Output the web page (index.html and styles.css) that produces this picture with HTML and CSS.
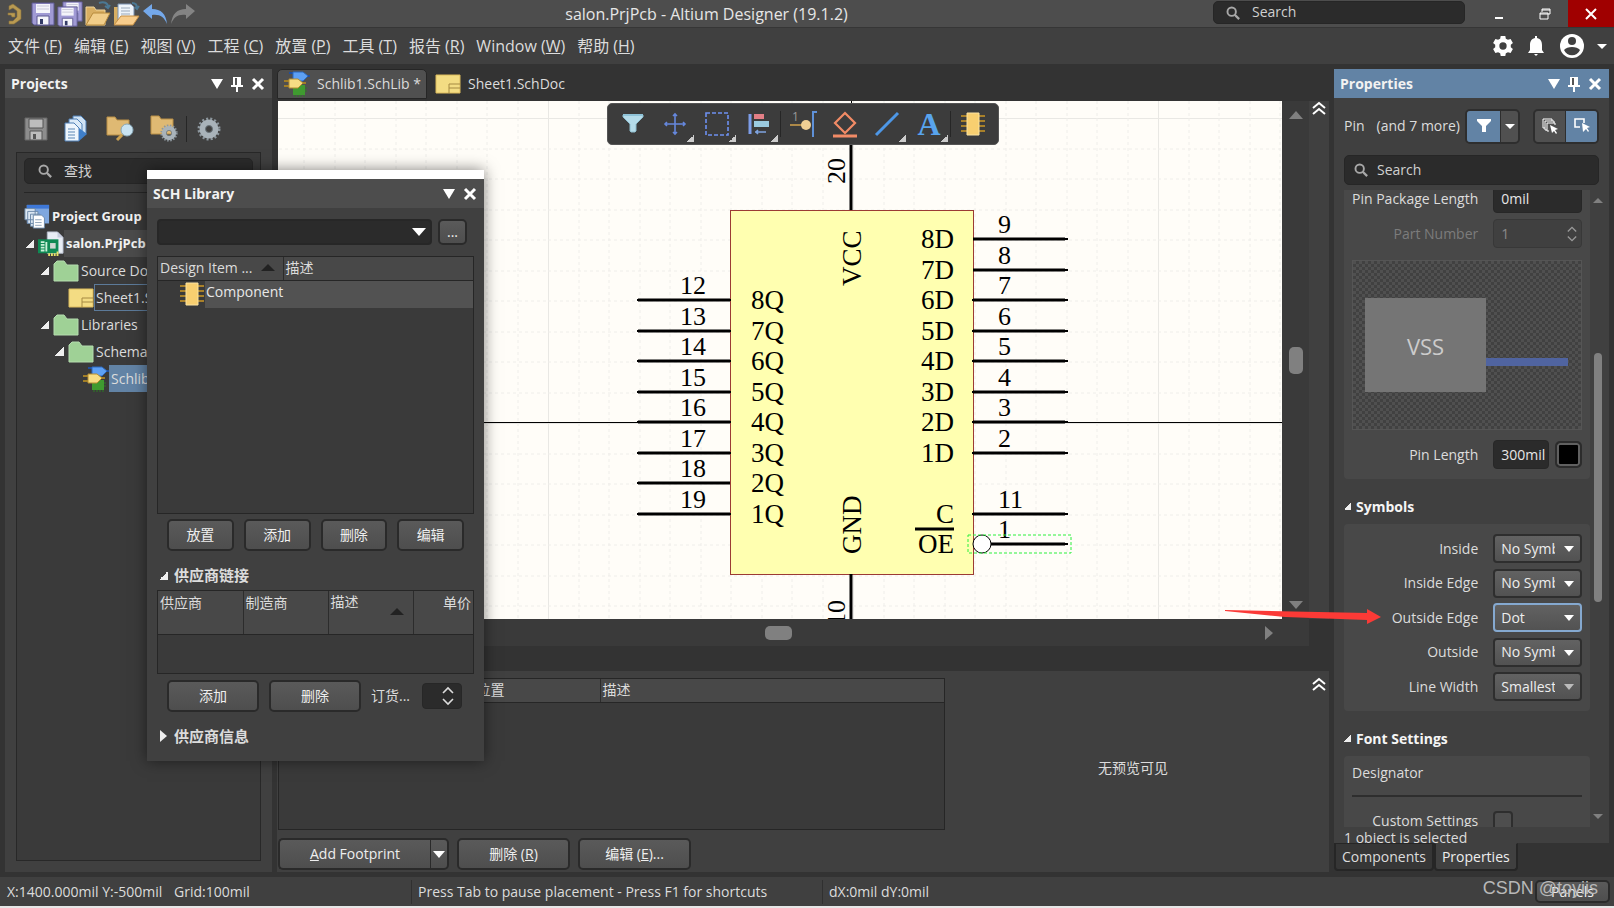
FILE: index.html
```html
<!DOCTYPE html>
<html lang="zh-CN">
<head>
    <meta charset="UTF-8">
    <meta name="viewport" content="width=device-width, initial-scale=1.0">
    <title>salon.PrjPcb - Altium Designer (19.1.2)</title>
    <link rel="stylesheet" href="styles.css">
</head>
<body>

    <!-- shared icons -->
    <svg class="defs" width="0" height="0" aria-hidden="true">
        <symbol id="floppy" viewBox="0 0 24 24">
            <path d="M1 1h22v22H3l-2-2z" fill="#a09ad4" stroke="#5b5790"/>
            <path d="M5 2h14v9H5z" fill="#f4f4fa"/>
            <path d="M6 4h12M6 7h12" stroke="#c8c8d8"/>
            <path d="M6 14h12v9H6z" fill="#f4f4fa" stroke="#5b5790"/>
            <path d="M9 17h3v5H9z" fill="#333a66"/>
        </symbol>
        <symbol id="search" viewBox="0 0 16 16">
            <circle cx="6.500" cy="6.500" r="4.800" fill="none" stroke="currentColor" stroke-width="2.200"/>
            <path d="M10 10l5 5" stroke="currentColor" stroke-width="2.600"/>
        </symbol>
        <symbol id="folder" viewBox="0 0 26 22">
            <path d="M1 21V4l3-3h7l3 4h11v16z" fill="#9fd196" stroke="#b4dcae"/>
        </symbol>
        <symbol id="sheet" viewBox="0 0 26 20">
            <path d="M1 1h24v18H1z" fill="#f3dc83" stroke="#dcbb5c"/>
            <path d="M25 10H14v9M14 14h11" fill="none" stroke="#a58a42"/>
        </symbol>
        <symbol id="schlib" viewBox="0 0 26 26">
            <path d="M9 14h12v10H9z" fill="#3f9a30"/>
            <path d="M11 24v2M14 24v2M17 24v2M20 24v2M21 17h2M21 20h2" stroke="#2d7a22"/>
            <path d="M5 2h4M22 5h4" stroke="#1f4f9f" stroke-width="2"/>
            <path d="M9 1h10l5 4-5 5H9z" fill="#5da0f4" stroke="#2d68bd"/>
            <path d="M0 10h5M0 15h5M18 12h4" stroke="#a27e26" stroke-width="2"/>
            <path d="M5 8h9l5 4-5 5H5z" fill="#f6dd84" stroke="#b48d30"/>
        </symbol>
        <symbol id="chip" viewBox="0 0 24 24">
            <path d="M0 4h24M0 9h24M0 14h24M0 19h24" stroke="#a8802a" stroke-width="2"/>
            <path d="M6 1h12v22H6z" fill="#f8cf70" stroke="#fbe3a2"/>
        </symbol>
        <symbol id="pin" viewBox="0 0 12 16">
            <path d="M2 1h8v8H2zM0 9h12v2H0zM5 11h2v5H5z" fill="#fff"/>
            <path d="M4 2h2v7H4z" fill="#555"/>
        </symbol>
        <symbol id="cross" viewBox="0 0 14 14">
            <path d="M2 2l10 10M12 2L2 12" stroke="#fff" stroke-width="3"/>
        </symbol>
        <symbol id="up2" viewBox="0 0 14 14">
            <path d="M1 7l6-5 6 5M1 13l6-5 6 5" fill="none" stroke="#fff" stroke-width="2"/>
        </symbol>
        <symbol id="gear" viewBox="0 0 24 24">
            <circle cx="12" cy="12" r="10" fill="none" stroke="#8d979e" stroke-width="3" stroke-dasharray="2 2"/>
            <circle cx="12" cy="12" r="6.500" fill="none" stroke="#a9b3ba" stroke-width="6"/>
            <circle cx="12" cy="12" r="3.500" fill="none" stroke="#6a747b"/>
        </symbol>
        <symbol id="spin" viewBox="0 0 12 20">
            <path d="M1 7l5-5 5 5M1 13l5 5 5-5" fill="none" stroke="currentColor" stroke-width="1.600"/>
        </symbol>
    </svg>

    <header class="titlebar">
        <div class="quick">
            <svg class="logo" width="15" height="22" viewBox="0 0 15 22"><path d="M2 3l4-2 8 6v9l-7 5H2v-3h4l4-4V8L6 5 2 7zM1 10h7v4H5l-1-2H1z" fill="#b99a52" stroke="#8b733c" stroke-width=".6"/></svg>
            <button title="Save"><svg width="24" height="24"><use href="#floppy"/></svg></button>
            <button title="Save All"><svg width="26" height="26" viewBox="0 0 26 26"><use href="#floppy" x="5" y="0" width="21" height="21"/><use href="#floppy" x="0" y="5" width="21" height="21"/></svg></button>
            <button title="Open"><svg width="26" height="26" viewBox="0 0 26 26"><path d="M1 24V6h8l2 3h9v15z" fill="#d8ae62" stroke="#f0d49a"/><path d="M1 24l7-12h17l-6 12z" fill="#f1cd89" stroke="#b88b3d"/><path d="M14 2c5-2 9 0 9 4m-3-1l3 2 2-3" fill="none" stroke="#4b7894" stroke-width="2"/></svg></button>
            <button title="Open Project"><svg width="27" height="26" viewBox="0 0 27 26"><path d="M1 24V6h6v18z" fill="#d8ae62"/><path d="M5 3h13l3 3v14H5z" fill="#eef4fa" stroke="#7890b0"/><path d="M8 7h9M8 10h9M8 13h9" stroke="#9aa9bb"/><path d="M1 24l7-9h18l-6 9z" fill="#f8cd8c" stroke="#c58f45"/><path d="M19 2c4 0 5 2 5 5m-2-1l2 2 2-3" fill="none" stroke="#4b7894" stroke-width="2"/></svg></button>
            <button title="Undo"><svg width="26" height="22" viewBox="0 0 26 22"><path d="M1 8l9-7v5c9 0 14 5 15 15-3-7-7-10-15-9v4z" fill="#74a8ea"/></svg></button>
            <button title="Redo"><svg width="26" height="22" viewBox="0 0 26 22"><path d="M25 8l-9-7v5C7 6 2 11 1 21c3-7 7-10 15-9v4z" fill="#848484"/></svg></button>
        </div>
        <h1 class="app-title">salon.PrjPcb - Altium Designer (19.1.2)</h1>
        <label class="search-box title-search"><svg width="14" height="14"><use href="#search"/></svg><input type="text" placeholder="Search" aria-label="Search"></label>
        <div class="window-buttons">
            <button title="Minimize"><svg width="12" height="12" viewBox="0 0 12 12"><path d="M2 10h8" stroke="#fff" stroke-width="2"/></svg></button>
            <button title="Restore"><svg width="12" height="12" viewBox="0 0 12 12"><path d="M3 4V1h8v5H9M1 5h8v6H1zM1 6h8M3 2h8" fill="none" stroke="#fff"/></svg></button>
            <button class="close" title="Close"><svg width="14" height="14" viewBox="0 0 14 14"><path d="M2 2l10 10M12 2L2 12" stroke="#fff" stroke-width="2"/></svg></button>
        </div>
    </header>

    <nav class="menubar">
        <button>文件 (<u>F</u>)</button>
        <button>编辑 (<u>E</u>)</button>
        <button>视图 (<u>V</u>)</button>
        <button>工程 (<u>C</u>)</button>
        <button>放置 (<u>P</u>)</button>
        <button>工具 (<u>T</u>)</button>
        <button>报告 (<u>R</u>)</button>
        <button>Window (<u>W</u>)</button>
        <button>帮助 (<u>H</u>)</button>
        <div class="account">
            <svg width="22" height="22" viewBox="0 0 24 24"><path fill="#fff" fill-rule="evenodd" d="M9.500 1h5l.6 3 2.300 1.300 2.900-1 2.500 4.300-2.300 2v2.800l2.300 2-2.500 4.300-2.900-1-2.300 1.300-.6 3h-5l-.6-3-2.300-1.300-2.900 1-2.500-4.300 2.300-2v-2.800l-2.300-2 2.500-4.300 2.900 1L8.900 4zM12 8a4 4 0 1 0 0 8 4 4 0 0 0 0-8z"/></svg>
            <svg width="18" height="22" viewBox="0 0 18 22"><path fill="#fff" d="M8 1h2v2c4 1 5 4 5 7v5l2 3H1l2-3v-5c0-3 1-6 5-7zM7 19h4l-2 2z"/></svg>
            <svg class="user" width="24" height="24" viewBox="0 0 24 24"><circle cx="12" cy="12" r="12" fill="#fff"/><circle cx="12" cy="7" r="4" fill="#404040"/><path d="M4 16c3-4 13-4 16 0-3 7-13 7-16 0z" fill="#404040"/></svg>
            <span class="caret small"></span>
        </div>
    </nav>

    <main class="workspace">

        <section class="panel projects">
            <div class="panel-head">
                <h2>Projects</h2>
                <span class="caret tall"></span>
                <svg width="12" height="16"><use href="#pin"/></svg>
                <svg width="14" height="14"><use href="#cross"/></svg>
            </div>
            <div class="project-tools">
                <button title="Save"><svg width="24" height="24" viewBox="0 0 24 24"><path d="M1 1h22v22H1z" fill="#8d8d8d" stroke="#666"/><path d="M5 2h14v9H5zM6 14h12v9H6z" fill="#bdbdbd" stroke="#555"/><path d="M9 17h3v5H9z" fill="#555"/></svg></button>
                <button title="Compile"><svg width="26" height="28" viewBox="0 0 26 28"><path d="M9 1h8l5 5v13H9z" fill="#cfe2f4" stroke="#4e7fb5"/><path d="M5 4h8l5 5v13H5z" fill="#dcebf8" stroke="#4e7fb5"/><path d="M1 8h9l5 5v13H1z" fill="#eef6fd" stroke="#4e7fb5"/><path d="M4 14h7M4 17h7M4 20h7M4 23h7" stroke="#5b87b5"/><path d="M15 13l8 6-8 7z" fill="#3f7fc9"/></svg></button>
                <button title="Explore"><svg width="28" height="26" viewBox="0 0 28 26"><path d="M1 19V1h8l2 3h12v15z" fill="#dfb973" stroke="#b98f46"/><path d="M16 19l-5 5" stroke="#caa050" stroke-width="3"/><circle cx="21" cy="14" r="6" fill="#c9e3f1" stroke="#87a7b8"/></svg></button>
                <button title="Project options"><svg width="28" height="28" viewBox="0 0 28 28"><path d="M1 19V1h8l2 3h12v15z" fill="#dfb973" stroke="#b98f46"/><use href="#gear" x="10" y="9" width="18" height="18"/></svg></button>
                <i class="tool-sep"></i>
                <button title="Settings"><svg width="24" height="24"><use href="#gear"/></svg></button>
            </div>
            <div class="tree-box">
                <label class="search-box"><svg width="14" height="14"><use href="#search"/></svg><input type="text" placeholder="查找" aria-label="查找"></label>
                <hr>
                <ul class="tree">
                    <li class="root"><svg width="26" height="27" viewBox="0 0 28 27"><path d="M3 1h24v20H3z" fill="#7fa7de"/><path d="M3 1h24v4H3z" fill="#3e78d8"/><path d="M1 5h11v12H1zM4 8h11v13H4zM7 11h10v13H7z" fill="#dbe7f3" stroke="#6a87a8"/><path d="M10 12h9l3 3v11H10z" fill="#fff" stroke="#6a87a8"/><path d="M12 17h7M12 20h7M12 23h7" stroke="#8aa0b8"/></svg><span>Project Group</span></li>
                    <li class="level1"><i class="open"></i><svg width="26" height="27" viewBox="0 0 28 27"><path d="M10 1h11l6 6v17H10z" fill="#e8edf5" stroke="#b5bccb"/><path d="M21 1v6h6" fill="#c5cbdd"/><path d="M0 9h22v15H0z" fill="#0f8a54"/><path d="M3 12h4M3 15h4M3 18h4M3 21h4M9 12v10" stroke="#c9f0d8" stroke-width="2"/><path d="M13 13h6v6h-6z" fill="#cfd8d2"/><path d="M12 24v3M15 24v3M18 24v3M21 22v5" stroke="#e8e46a" stroke-width="2"/></svg><span class="active">salon.PrjPcb</span></li>
                    <li class="level2"><i class="open"></i><svg width="26" height="22"><use href="#folder"/></svg><span>Source Documents</span></li>
                    <li class="level3 leaf"><svg width="26" height="20"><use href="#sheet"/></svg><span class="outlined">Sheet1.SchDoc</span></li>
                    <li class="level2"><i class="open"></i><svg width="26" height="22"><use href="#folder"/></svg><span>Libraries</span></li>
                    <li class="level3"><i class="open"></i><svg width="26" height="22"><use href="#folder"/></svg><span>Schematic Library</span></li>
                    <li class="level4 leaf"><svg width="26" height="26"><use href="#schlib"/></svg><span class="selected">Schlib1.SchLib</span></li>
                </ul>
            </div>
        </section>

        <section class="editor">
            <div class="doc-tabs">
                <button class="doc-tab current"><svg width="26" height="26"><use href="#schlib"/></svg>Schlib1.SchLib *</button>
                <button class="doc-tab"><svg width="26" height="20"><use href="#sheet"/></svg>Sheet1.SchDoc</button>
            </div>
            <div class="sheet-area">
                <div class="sheet">
                    <svg class="drawing" width="100%" height="100%">
                        <defs>
                            <pattern id="grid" x="270" y="17" width="305" height="305" patternUnits="userSpaceOnUse">
                                <path d="M0 0v305M0 0h305" stroke="#e9e8e4" stroke-width="2"/>
                                <path d="M31 0v305M61 0v305M92 0v305M122 0v305M153 0v305M183 0v305M214 0v305M244 0v305M275 0v305M0 31h305M0 61h305M0 92h305M0 122h305M0 153h305M0 183h305M0 214h305M0 244h305M0 275h305" stroke="#efeeea" stroke-dasharray="3 3"/>
                            </pattern>
                        </defs>
                        <rect width="100%" height="100%" fill="url(#grid)"/>
                        <g transform="translate(-278 -101)">
                            <path class="axis" d="M278 422h2000M851 101v5"/>
                            <rect class="part" x="730" y="210" width="243" height="364"/>
                            <path class="pins" d="M638 300h92M638 331h92M638 361h92M638 392h92M638 422h92M638 453h92M638 483h92M638 514h92"/>
                            <path class="pins" d="M973 239h92M973 270h92M973 300h92M973 331h92M973 361h92M973 392h92M973 422h92M973 453h92M973 514h92M991 544h74"/>
                            <path class="pins" d="M851 130v80M851 574v60"/>
                            <path class="pin-ends" d="M637 300h431M637 331h431M637 361h431M637 392h431M637 422h431M637 453h431M637 483h1M637 514h431M1065 239h3M1065 270h3M1065 544h3"/>
                            <rect class="part-fill" x="731" y="211" width="241" height="362"/>
                            <g class="numbers" text-anchor="middle">
                                <text x="693" y="294">12</text><text x="693" y="325">13</text><text x="693" y="355">14</text><text x="693" y="386">15</text>
                                <text x="693" y="416">16</text><text x="693" y="447">17</text><text x="693" y="477">18</text><text x="693" y="508">19</text>
                            </g>
                            <g class="numbers">
                                <text x="998" y="233">9</text><text x="998" y="264">8</text><text x="998" y="294">7</text><text x="998" y="325">6</text><text x="998" y="355">5</text>
                                <text x="998" y="386">4</text><text x="998" y="416">3</text><text x="998" y="447">2</text><text x="998" y="508">11</text><text x="998" y="538">1</text>
                                <text transform="translate(845 184) rotate(-90)">20</text>
                                <text transform="translate(845 626) rotate(-90)">10</text>
                            </g>
                            <g class="names">
                                <text x="751" y="309">8Q</text><text x="751" y="340">7Q</text><text x="751" y="370">6Q</text><text x="751" y="401">5Q</text>
                                <text x="751" y="431">4Q</text><text x="751" y="462">3Q</text><text x="751" y="492">2Q</text><text x="751" y="523">1Q</text>
                                <text transform="translate(861 286) rotate(-90)">VCC</text>
                                <text transform="translate(861 554) rotate(-90)">GND</text>
                            </g>
                            <g class="names" text-anchor="end">
                                <text x="954" y="248">8D</text><text x="954" y="279">7D</text><text x="954" y="309">6D</text><text x="954" y="340">5D</text><text x="954" y="370">4D</text>
                                <text x="954" y="401">3D</text><text x="954" y="431">2D</text><text x="954" y="462">1D</text><text x="954" y="523">C</text><text x="954" y="553">OE</text>
                            </g>
                            <path class="pins" d="M915 529h39"/>
                            <circle cx="982" cy="544" r="9" fill="#fff" stroke="#000"/>
                            <rect class="selection" x="968" y="535" width="103" height="18"/>
                        </g>
                    </svg>
                    <div class="active-bar">
                        <button title="Filter"><svg width="26" height="26" viewBox="0 0 26 26"><path d="M3 4h20v2l-7 7v7l-1 1h-4l-1-1v-7L3 6z" fill="#b5dcea" stroke="#8dbccd"/><path d="M3 4h20" stroke="#8fc3d8" stroke-width="2"/></svg></button>
                        <button class="more" title="Move"><svg width="26" height="26" viewBox="0 0 26 26"><path d="M13 3v20M3 13h20M11 5l2-2 2 2M11 21l2 2 2-2M5 11l-2 2 2 2M21 11l2 2-2 2" fill="none" stroke="#6587dc" stroke-width="1.600"/></svg></button>
                        <button class="more" title="Select"><svg width="26" height="26" viewBox="0 0 26 26"><path d="M2 2h22v22H2z" fill="none" stroke="#6d90f0" stroke-width="1.600" stroke-dasharray="4 2"/></svg></button>
                        <button class="more" title="Align"><svg width="26" height="26" viewBox="0 0 26 26"><path d="M4 3v20" stroke="#7d9de8" stroke-width="3"/><path d="M8 3h10v5H8z" fill="#e37f86"/><path d="M8 10h15v6H8z" fill="#9bcbe0"/><path d="M9 21h11M12 19l-2 2 2 2" fill="none" stroke="#7fa4e0" stroke-width="1.600"/></svg></button>
                        <i class="tool-sep"></i>
                        <button title="Place pin"><svg width="28" height="28" viewBox="0 0 28 28"><path d="M1 15h14" stroke="#c99b4b" stroke-width="1.600"/><circle cx="17" cy="15" r="5" fill="#f0cf94"/><path d="M28 2h-4v25" fill="none" stroke="#5f91d8" stroke-width="2"/><text x="3" y="11" font-size="12" fill="#999">1</text></svg></button>
                        <button title="Place port"><svg width="26" height="28" viewBox="0 0 26 28"><path d="M13 3l10 10-10 10L3 13z" fill="none" stroke="#f28b66" stroke-width="2.200"/><path d="M1 26h24" stroke="#f28b66" stroke-width="3"/></svg></button>
                        <button class="more" title="Place line"><svg width="26" height="26" viewBox="0 0 26 26"><path d="M2 24L24 2" stroke="#4d97e6" stroke-width="3"/></svg></button>
                        <button class="more letter" title="Place text">A</button>
                        <i class="tool-sep"></i>
                        <button title="Place part"><svg width="24" height="26"><use href="#chip"/></svg></button>
                    </div>
                </div>
                <div class="vscroll"><i class="arrow up"></i><i class="thumb"></i><i class="arrow down"></i></div>
                <button class="collapse" title="Collapse"><svg width="14" height="14"><use href="#up2"/></svg></button>
            </div>
            <div class="hscroll"><i class="thumb"></i><i class="arrow right"></i></div>
            <div class="strip"></div>
            <div class="models">
                <div class="models-left">
                    <div class="grid-box">
                        <table>
                            <tr><th class="w-model"></th><th class="w-place">位置</th><th>描述</th></tr>
                        </table>
                    </div>
                    <div class="model-buttons">
                        <div class="split">
                            <button class="btn"><u>A</u>dd Footprint</button>
                            <button class="btn drop" title="More"><span class="caret"></span></button>
                        </div>
                        <button class="btn">删除 (<u>R</u>)</button>
                        <button class="btn">编辑 (<u>E</u>)...</button>
                    </div>
                </div>
                <p class="no-preview">无预览可见</p>
                <button class="collapse" title="Collapse"><svg width="14" height="14"><use href="#up2"/></svg></button>
            </div>
        </section>

        <section class="properties">
            <div class="panel props-panel">
                <div class="panel-head focused">
                    <h2>Properties</h2>
                    <span class="caret tall"></span>
                    <svg width="12" height="16"><use href="#pin"/></svg>
                    <svg width="14" height="14"><use href="#cross"/></svg>
                </div>
                <div class="filter-row">
                    <span>Pin</span>
                    <span class="count">(and 7 more)</span>
                    <div class="btn-group">
                        <button class="on" title="Filter"><svg width="16" height="16" viewBox="0 0 16 16"><path d="M1 1h14v2l-5 5v6H6V8L1 3z" fill="#fff"/></svg></button>
                        <button class="thin" title="Filter list"><span class="caret small"></span></button>
                    </div>
                    <div class="btn-group">
                        <button class="half" title="Select all"><svg width="16" height="16" viewBox="0 0 16 16"><path d="M3 10H1V1h9v2M5 12H3V3h9v2M7 13H5V5h8v2" fill="none" stroke="#fff"/><path d="M8 7l8 4-3 1 2 3-1 1-2-3-2 2z" fill="#fff"/></svg></button>
                        <button class="half on" title="Select"><svg width="16" height="16" viewBox="0 0 16 16"><path d="M6 9H1V1h9v4" fill="none" stroke="#fff" stroke-width="1.600"/><path d="M8 5l8 4-3 1 2 3-1 1-2-3-3 3z" fill="#fff"/></svg></button>
                    </div>
                </div>
                <label class="search-box props-search"><svg width="14" height="14"><use href="#search"/></svg><input type="text" placeholder="Search" aria-label="Search properties"></label>

                <div class="props-scroll">
                    <div class="props-content">
                        <div class="card first">
                            <div class="field"><label for="pkg">Pin Package Length</label><input id="pkg" class="box" type="text" value="0mil"></div>
                            <div class="field off"><label for="part">Part Number</label><div class="spinner"><input id="part" class="box" type="text" value="1" disabled><svg width="10" height="20"><use href="#spin"/></svg></div></div>
                            <div class="preview"><div class="preview-body">VSS</div><div class="preview-pin"></div></div>
                            <div class="field"><label for="len">Pin Length</label><div class="pair"><input id="len" class="box" type="text" value="300mil"><button class="swatch" title="Colour"></button></div></div>
                        </div>
                        <h3><i class="open"></i>Symbols</h3>
                        <div class="card symbols">
                            <div class="field"><label for="s1">Inside</label><div class="select"><select id="s1"><option>No Symbol</option></select></div></div>
                            <div class="field"><label for="s2">Inside Edge</label><div class="select"><select id="s2"><option>No Symbol</option></select></div></div>
                            <div class="field"><label for="s3">Outside Edge</label><div class="select picked"><select id="s3"><option>Dot</option></select></div></div>
                            <div class="field"><label for="s4">Outside</label><div class="select"><select id="s4"><option>No Symbol</option></select></div></div>
                            <div class="field"><label for="s5">Line Width</label><div class="select dim"><select id="s5"><option>Smallest</option></select></div></div>
                        </div>
                        <h3><i class="open"></i>Font Settings</h3>
                        <div class="card fonts">
                            <h4>Designator</h4>
                            <div class="field"><label for="custom">Custom Settings</label><div class="tick"><input id="custom" type="checkbox"></div></div>
                        </div>
                    </div>
                    <div class="props-bar"><i class="arrow up"></i><i class="thumb"></i><i class="arrow down"></i></div>
                </div>
                <p class="selected-count">1 object is selected</p>
            </div>
            <div class="panel-tabs">
                <button>Components</button>
                <button class="current">Properties</button>
            </div>
            <svg class="pointer" width="156" height="16" viewBox="0 0 156 16"><path d="M0 1l142 3V0l14 8-14 7v-4L60 8 0 2z" fill="#fb3a36"/></svg>
        </section>
    </main>

    <footer class="statusbar">
        <span class="coords">X:1400.000mil Y:-500mil</span>
        <span class="grid-size">Grid:100mil</span>
        <span class="hint">Press Tab to pause placement - Press F1 for shortcuts</span>
        <span class="delta">dX:0mil dY:0mil</span>
        <button class="btn panels">Panels</button>
        <span class="watermark">CSDN @toyiis</span>
    </footer>

    <!-- floating library window -->
    <section class="sch-library">
        <div class="panel-head">
            <h2>SCH Library</h2>
            <span class="caret tall"></span>
            <svg width="14" height="14"><use href="#cross"/></svg>
        </div>
        <div class="sch-body">
            <div class="lib-row">
                <div class="select lib"><select aria-label="Library"><option></option></select></div>
                <button class="btn dots">...</button>
            </div>
            <div class="grid-box items">
                <table>
                    <tr><th class="w-item">Design Item ... <i class="sorted"></i></th><th>描述</th></tr>
                    <tr><td colspan="2"><div class="item"><svg width="24" height="24"><use href="#chip"/></svg><span>Component</span></div></td></tr>
                </table>
            </div>
            <div class="four">
                <button class="btn">放置</button>
                <button class="btn">添加</button>
                <button class="btn">删除</button>
                <button class="btn">编辑</button>
            </div>
            <h3><i class="open"></i>供应商链接</h3>
            <div class="grid-box suppliers">
                <table>
                    <tr><th>供应商</th><th>制造商</th><th>描述<i class="sorted"></i></th><th class="price">单价</th></tr>
                </table>
            </div>
            <div class="order">
                <button class="btn">添加</button>
                <button class="btn">删除</button>
                <label for="qty">订货...</label>
                <div class="spinner qty"><input id="qty" class="box" type="text"><svg width="12" height="20"><use href="#spin"/></svg></div>
            </div>
            <h3 class="info"><i class="closed"></i>供应商信息</h3>
        </div>
    </section>

</body>
</html>
```

FILE: styles.css
```css
* {
    box-sizing: border-box;
}
body {
    margin: 0;
    height: 100vh;
    display: flex;
    flex-direction: column;
    overflow: hidden;
    position: relative;
    background-color: #333;
    border-bottom: 2px solid #e6e6e6;
    color: #dcdcdc;
    font-family: "Open Sans", "Noto Sans CJK SC", sans-serif;
    font-size: 14px;
    line-height: 20px;
}
h1, h2, h3, h4, p, ul {
    margin: 0;
    padding: 0;
    font-size: 14px;
}
button, input, select {
    font: inherit;
    color: inherit;
    margin: 0;
}
button {
    background: none;
    border: none;
    padding: 0;
}
svg {
    display: block;
    flex: none;
}
i {
    flex: none;
}
.defs {
    position: absolute;
}

/* little triangles */
.caret {
    flex: none;
    border: 7px solid transparent;
    border-top: 7px solid #fff;
    border-bottom: none;
}
.caret.tall {
    border-width: 6px;
    border-top-width: 10px;
    border-bottom: none;
}
.caret.small {
    border-width: 5px;
    border-top-width: 5px;
    border-bottom: none;
}
.open {
    width: 9px;
    height: 9px;
    background: linear-gradient(135deg, transparent 50%, #eee 50%);
}
.closed {
    border: 6px solid transparent;
    border-left: 7px solid #eee;
    border-right: none;
}
.sorted {
    display: inline-block;
    border: 7px solid transparent;
    border-bottom: 7px solid #222;
    border-top: none;
}
.arrow {
    border: 7px solid transparent;
}
.arrow.up {
    border-bottom: 8px solid #808080;
    border-top: none;
}
.arrow.down {
    border-top: 8px solid #808080;
    border-bottom: none;
}
.arrow.right {
    border-left: 8px solid #808080;
    border-right: none;
}

/* shared controls */
.btn {
    height: 32px;
    border: 2px solid #2a2a2a;
    border-radius: 5px;
    background: linear-gradient(#5a5a5a, #4e4e4e);
    color: #eee;
}
.box {
    width: 100%;
    height: 29px;
    border: 1px solid #272727;
    border-radius: 4px;
    background-color: #2b2b2b;
    padding: 0 0 0 7px;
    color: #e6e6e6;
}
.search-box {
    display: flex;
    align-items: center;
    background-color: #2b2b2b;
    border: 1px solid #262626;
    border-radius: 5px;
    color: #a8a8a8;
}
.search-box input {
    flex: 1;
    min-width: 0;
    border: none;
    background: none;
    padding: 0 0 1px;
}
.search-box input::placeholder {
    color: #d0d0d0;
}
.select {
    position: relative;
}
.select select {
    display: block;
    width: 100%;
    height: 29px;
    appearance: none;
    border: 2px solid #2e2e2e;
    border-radius: 4px;
    background: linear-gradient(#626262, #525252);
    color: #eee;
    padding: 0 25px 0 6px;
}
.select::after {
    content: "";
    position: absolute;
    right: 8px;
    top: 12px;
    border: 5px solid transparent;
    border-top: 6px solid #fff;
    border-bottom: none;
    pointer-events: none;
}
.select.dim::after {
    border-top-color: #bbb;
}
.select.picked select {
    border: 2px solid #85a9d0;
}
.spinner {
    display: grid;
    align-items: center;
}
.spinner > * {
    grid-area: 1 / 1;
}
.spinner svg {
    justify-self: end;
    margin-right: 5px;
}
.panel {
    background-color: #404040;
}
.panel-head {
    height: 29px;
    padding: 0 7px 0 6px;
    display: flex;
    align-items: center;
    gap: 8px;
    background-color: #4d4d4d;
    color: #f2f2f2;
}
.panel-head h2 {
    flex: 1;
}
.panel-head.focused {
    background-color: #6283a5;
}
.tool-sep {
    width: 1px;
    height: 26px;
    background-color: #262626;
}
.grid-box {
    border: 1px solid #262626;
    background-color: #3a3a3a;
}
.grid-box table {
    width: 100%;
    border-collapse: collapse;
    table-layout: fixed;
}
.grid-box th {
    height: 23px;
    padding: 0 2px;
    text-align: left;
    font-weight: normal;
    background-color: #484848;
    border-bottom: 1px solid #262626;
    border-left: 1px solid #2c2c2c;
    white-space: nowrap;
}
.grid-box th:first-child {
    border-left: none;
}

/* title bar and menu */
.titlebar {
    height: 28px;
    display: flex;
    background-color: #4d4d4d;
    border-bottom: 1px solid #363636;
}
.quick {
    width: 200px;
    padding-left: 7px;
    display: flex;
    align-items: center;
    gap: 2px;
}
.logo {
    margin-right: 7px;
}
.app-title {
    flex: 1;
    text-align: center;
    font-size: 16px;
    font-weight: normal;
    line-height: 28px;
    color: #e6e6e6;
}
.title-search {
    width: 252px;
    height: 23px;
    margin-top: 1px;
    padding: 0 12px;
    gap: 12px;
}
.window-buttons {
    width: 149px;
    padding-left: 11px;
    display: flex;
}
.window-buttons button {
    width: 46px;
    height: 27px;
    display: grid;
    place-items: center;
}
.window-buttons .close {
    background-color: #a00000;
}
.menubar {
    height: 36px;
    padding: 0 7px 0 8px;
    display: flex;
    align-items: center;
    gap: 12px;
    background-color: #404040;
    font-size: 16px;
}
.account {
    margin-left: auto;
    display: flex;
    align-items: center;
    gap: 13px;
}
.user {
    margin-left: 2px;
}

/* workspace */
.workspace {
    flex: 1;
    min-height: 0;
    display: grid;
    grid-template-columns: 267px minmax(0, 1fr) 275px;
    grid-template-rows: minmax(0, 1fr);
    gap: 5px;
    padding: 5px;
}
.projects {
    display: flex;
    flex-direction: column;
}
.project-tools {
    height: 54px;
    padding: 8px 0 0 19px;
    display: flex;
    align-items: center;
    gap: 16px;
}
.project-tools .tool-sep {
    margin-left: -8px;
    margin-right: -6px;
}
.tree-box {
    flex: 1;
    margin: 0 11px;
    margin-bottom: 11px;
    padding: 5px 7px;
    border: 1px solid #282828;
    background-color: #3a3a3a;
}
.tree-box .search-box {
    height: 26px;
    padding: 0 13px;
    gap: 12px;
}
.tree-box hr {
    border: none;
    border-top: 1px solid #262626;
    margin: 8px 0 10px;
}
.tree {
    list-style: none;
    white-space: nowrap;
}
.tree li {
    height: 27px;
    display: flex;
    align-items: center;
    overflow: hidden;
}
.tree .open {
    margin-right: 4px;
}
.tree span {
    height: 27px;
    line-height: 25px;
    padding-left: 1px;
    border: 1px solid transparent;
    flex: 1;
}
.root, .level1 {
    font-size: 13px;
    font-weight: bold;
    color: #f2f2f2;
}
.level1 {
    padding-left: 1px;
}
.level2 {
    padding-left: 16px;
}
.level3 {
    padding-left: 31px;
}
.level3.leaf {
    padding-left: 44px;
}
.level4 {
    padding-left: 59px;
}
.tree .active {
    background-color: #4b4b4b;
}
.tree .outlined {
    border-color: #5c7a99;
}
.tree .selected {
    background-color: #6283a5;
}

/* editor */
.editor {
    display: flex;
    flex-direction: column;
}
.doc-tabs {
    height: 32px;
    display: flex;
    gap: 2px;
}
.doc-tab {
    height: 30px;
    display: flex;
    align-items: center;
    gap: 7px;
    padding: 0 5px 0 6px;
}
.doc-tab.current {
    border: 1px solid #262626;
    border-radius: 5px 5px 0 0;
    background-color: #505050;
}
.sheet-area {
    flex: 1;
    min-height: 0;
    display: flex;
    margin-left: 1px;
}
.sheet {
    flex: 1;
    min-width: 0;
    position: relative;
    background-color: #fffdf8;
}
.drawing {
    position: absolute;
    inset: 0;
}
.axis {
    stroke: #000;
    stroke-width: 1;
    shape-rendering: crispEdges;
}
.part {
    fill: #ffffb0;
    stroke: #9b3b34;
    shape-rendering: crispEdges;
}
.part-fill {
    fill: #ffffb0;
}
.pins {
    stroke: #000;
    stroke-width: 3;
}
.pin-ends {
    stroke: #000;
    stroke-width: 2;
}
.names, .numbers {
    font-family: "Liberation Serif", serif;
    font-size: 27px;
    fill: #000;
}
.numbers {
    font-size: 26px;
}
.selection {
    fill: none;
    stroke: #2bf03c;
    stroke-dasharray: 3 2;
}
/* floats over the sheet */
.active-bar {
    position: absolute;
    left: 329px;
    top: 2px;
    height: 42px;
    padding: 0 0 0 8px;
    display: flex;
    align-items: center;
    background-color: #3c3c3c;
    border: 1px solid #555;
    border-radius: 5px;
}
.active-bar button {
    width: 42px;
    height: 40px;
    padding-right: 8px;
    display: grid;
    place-items: center;
}
.active-bar .tool-sep {
    margin-right: 5px;
    margin-left: -4px;
}
.active-bar .more {
    background: linear-gradient(135deg, transparent 50%, #ccc 50%) 29px 31px / 7px 7px no-repeat;
}
.active-bar .letter {
    font: bold 32px "Liberation Serif", serif;
    color: #58a4ee;
}
.vscroll {
    width: 27px;
    padding: 10px 0;
    display: flex;
    flex-direction: column;
    align-items: center;
    justify-content: space-between;
    background-color: #3a3a3a;
}
.vscroll .thumb {
    width: 14px;
    height: 27px;
    border-radius: 5px;
    background-color: #808080;
}
.collapse {
    width: 20px;
    background-color: #404040;
    display: flex;
    justify-content: center;
}
.hscroll {
    height: 27px;
    margin-right: 20px;
    padding-right: 36px;
    display: flex;
    align-items: center;
    background-color: #3a3a3a;
}
.hscroll .thumb {
    width: 27px;
    height: 14px;
    margin: 0 auto 0 49%;
    border-radius: 5px;
    background-color: #808080;
}
.strip {
    height: 25px;
}
.models {
    height: 201px;
    display: flex;
    background-color: #404040;
}
.models-left {
    flex: 2;
    padding: 7px 0 2px 1px;
    display: flex;
    flex-direction: column;
    gap: 8px;
}
.models-left .grid-box {
    flex: 1;
}
.w-model {
    width: 195px;
}
.w-place {
    width: 126px;
}
.model-buttons {
    display: flex;
    gap: 8px;
}
.model-buttons > .btn {
    width: 113px;
}
.split {
    display: flex;
}
.split .btn {
    width: 152px;
    border-right: none;
    border-radius: 5px 0 0 5px;
}
.split .drop {
    width: 19px;
    display: grid;
    place-items: center;
    border-right: 2px solid #2a2a2a;
    border-left: 1px solid #2a2a2a;
    border-radius: 0 5px 5px 0;
}
.split .caret {
    border-left-width: 6px;
    border-right-width: 6px;
}
.no-preview {
    width: 364px;
    padding-left: 12px;
    text-align: center;
    line-height: 194px;
}
.models .collapse {
    padding-top: 6px;
}

/* properties */
.properties {
    position: relative;
    display: flex;
    flex-direction: column;
}
.props-panel {
    flex: 1;
    min-height: 0;
    display: flex;
    flex-direction: column;
}
.filter-row {
    height: 56px;
    padding: 0 10px;
    display: flex;
    align-items: center;
}
.count {
    flex: 1;
    margin-left: 12px;
}
.btn-group {
    height: 35px;
    display: flex;
    border: 2px solid #2e2e2e;
    border-radius: 5px;
    background-color: #505050;
    overflow: hidden;
}
.btn-group + .btn-group {
    margin-left: 13px;
}
.btn-group button {
    width: 34px;
    display: grid;
    place-items: center;
    border-right: 1px solid #2e2e2e;
}
.btn-group .half {
    width: 31px;
}
.btn-group .thin {
    width: 17px;
}
.btn-group button:last-child {
    border-right: none;
}
.btn-group .on {
    background-color: #6283a5;
}
.props-search {
    flex: none;
    height: 30px;
    margin: 1px 10px 5px;
    padding: 0 9px;
    gap: 9px;
}
.props-scroll {
    flex: 1;
    min-height: 0;
    display: flex;
    overflow: hidden;
    padding-left: 10px;
}
.props-content {
    flex: 1;
}
.props-content h3 {
    height: 45px;
    padding-top: 10px;
    display: flex;
    align-items: center;
    gap: 5px;
    color: #f5f5f5;
}
.props-content .open {
    width: 7px;
    height: 7px;
}
.card {
    padding: 10px 8px;
    border-radius: 4px;
    background-color: #484848;
}
.card.first {
    margin-top: -6px;
    padding-top: 0;
    display: flex;
    flex-direction: column;
    gap: 6px;
}
.field {
    display: grid;
    grid-template-columns: 1fr 89px;
    align-items: center;
    gap: 15px;
    text-align: right;
    white-space: nowrap;
}
.field.off {
    color: #7c7c7c;
}
.off .box {
    background-color: #404040;
    border-color: #383838;
    color: #8a8a8a;
}
.off svg {
    color: #9a9a9a;
}
.preview {
    height: 170px;
    margin: 6px 0 4px;
    padding-left: 12px;
    display: flex;
    align-items: center;
    border: 1px solid #555;
    background: repeating-conic-gradient(#414141 0 25%, #505050 0 50%) 0 0 / 6px 6px;
}
.preview-body {
    width: 121px;
    height: 94px;
    line-height: 96px;
    text-align: center;
    font-size: 22px;
    color: #ccc;
    background-color: #757575;
}
.preview-pin {
    width: 82px;
    height: 8px;
    margin-top: 33px;
    background-color: #5064a0;
}
.pair {
    display: flex;
    align-items: center;
    gap: 6px;
}
.swatch {
    flex: none;
    width: 27px;
    height: 27px;
    border: 2px solid #2c2c2c;
    border-radius: 5px;
    background-color: #000;
    box-shadow: inset 0 0 0 2px #606060;
}
.symbols {
    height: 187px;
    display: flex;
    flex-direction: column;
    justify-content: space-between;
}
.fonts h4 {
    height: 31px;
    line-height: 14px;
    font-weight: normal;
    border-bottom: 2px solid #2e2e2e;
    margin-bottom: 14px;
}
.tick {
    display: flex;
}
.tick input {
    appearance: none;
    width: 20px;
    height: 20px;
    border: 2px solid #2e2e2e;
    border-radius: 4px;
    background-color: #4e4e4e;
}
.props-bar {
    width: 21px;
    padding: 8px 3px 8px 0;
    display: flex;
    flex-direction: column;
    align-items: center;
}
.props-bar .arrow {
    border-width: 5px;
}
.props-bar .up {
    border-top: none;
}
.props-bar .down {
    border-bottom: none;
    margin-top: auto;
}
.props-bar .thumb {
    width: 8px;
    height: 249px;
    margin-top: 150px;
    border-radius: 4px;
    background-color: #808080;
}
.selected-count {
    height: 16px;
    padding-left: 10px;
    line-height: 22px;
    overflow: hidden;
    flex: none;
}
.panel-tabs {
    height: 29px;
    display: flex;
}
.panel-tabs button {
    height: 28px;
    padding: 0 6px;
    border: 2px solid #262626;
    border-top-width: 1px;
    border-radius: 0 0 4px 4px;
    background-color: #363636;
}
.panel-tabs .current {
    border-top-color: #404040;
    background-color: #404040;
    color: #eee;
}
/* annotation arrow over the sheet and the panel */
.pointer {
    position: absolute;
    left: -109px;
    top: 540px;
}

/* status bar */
.statusbar {
    position: relative;
    height: 29px;
    padding: 0 4px 0 7px;
    display: flex;
    align-items: center;
    background-color: #404040;
}
.coords {
    width: 167px;
}
.grid-size {
    width: 237px;
}
.hint {
    width: 411px;
}
.hint, .delta {
    line-height: 24px;
    padding-left: 6px;
    border-left: 1px solid #303030;
}
.panels {
    height: 23px;
    width: 75px;
    margin-left: auto;
    line-height: 18px;
}
.watermark {
    position: absolute;
    right: 16px;
    bottom: 8px;
    font-family: "Liberation Sans", sans-serif;
    font-size: 18px;
    color: #b8b8b8;
}

/* floating SCH Library window */
.sch-library {
    position: absolute;
    left: 147px;
    top: 170px;
    width: 337px;
    border-top: 9px solid #fff;
    background-color: #404040;
    box-shadow: 0 0 14px rgba(0, 0, 0, 0.5);
}
.sch-body {
    padding: 11px 10px 15px;
}
.lib-row {
    display: flex;
    gap: 6px;
    padding-right: 7px;
    margin-bottom: 11px;
}
.lib {
    flex: 1;
}
.lib select {
    height: 26px;
    background: #2b2b2b;
    border-color: #272727;
}
.lib::after {
    right: 6px;
    top: 9px;
    border-width: 7px;
    border-top-width: 8px;
    border-bottom: none;
}
.dots {
    width: 29px;
    height: 26px;
    line-height: 18px;
}
.items {
    height: 258px;
}
.w-item {
    width: 125px;
}
.w-item .sorted {
    margin-left: 5px;
    vertical-align: 2px;
}
.items td {
    padding: 0;
}
.item {
    display: flex;
    align-items: center;
    padding-left: 22px;
    gap: 1px;
}
.item span {
    flex: 1;
    height: 27px;
    line-height: 22px;
    padding-left: 1px;
    background-color: #525252;
    color: #e8e8e8;
}
.four {
    display: grid;
    grid-template-columns: repeat(4, 1fr);
    gap: 10px;
    padding: 5px 10px 0;
}
.sch-body h3 {
    height: 39px;
    padding: 9px 0 0 2px;
    display: flex;
    align-items: center;
    gap: 6px;
    font-size: 15px;
}
.suppliers {
    height: 84px;
}
.suppliers th {
    height: 43px;
    padding-bottom: 18px;
    width: 85px;
}
.suppliers .price {
    width: auto;
    text-align: right;
}
.suppliers .sorted {
    margin-left: 31px;
    vertical-align: -8px;
}
.order {
    display: flex;
    align-items: center;
    gap: 10px;
    padding: 6px 12px 0 10px;
}
.order .btn {
    width: 92px;
}
.order label {
    flex: 1;
}
.qty .box {
    width: 40px;
    height: 26px;
}
.qty svg {
    margin-right: 8px;
}
.sch-body .info {
    height: 34px;
    padding: 14px 0 0 3px;
    gap: 7px;
}
```
